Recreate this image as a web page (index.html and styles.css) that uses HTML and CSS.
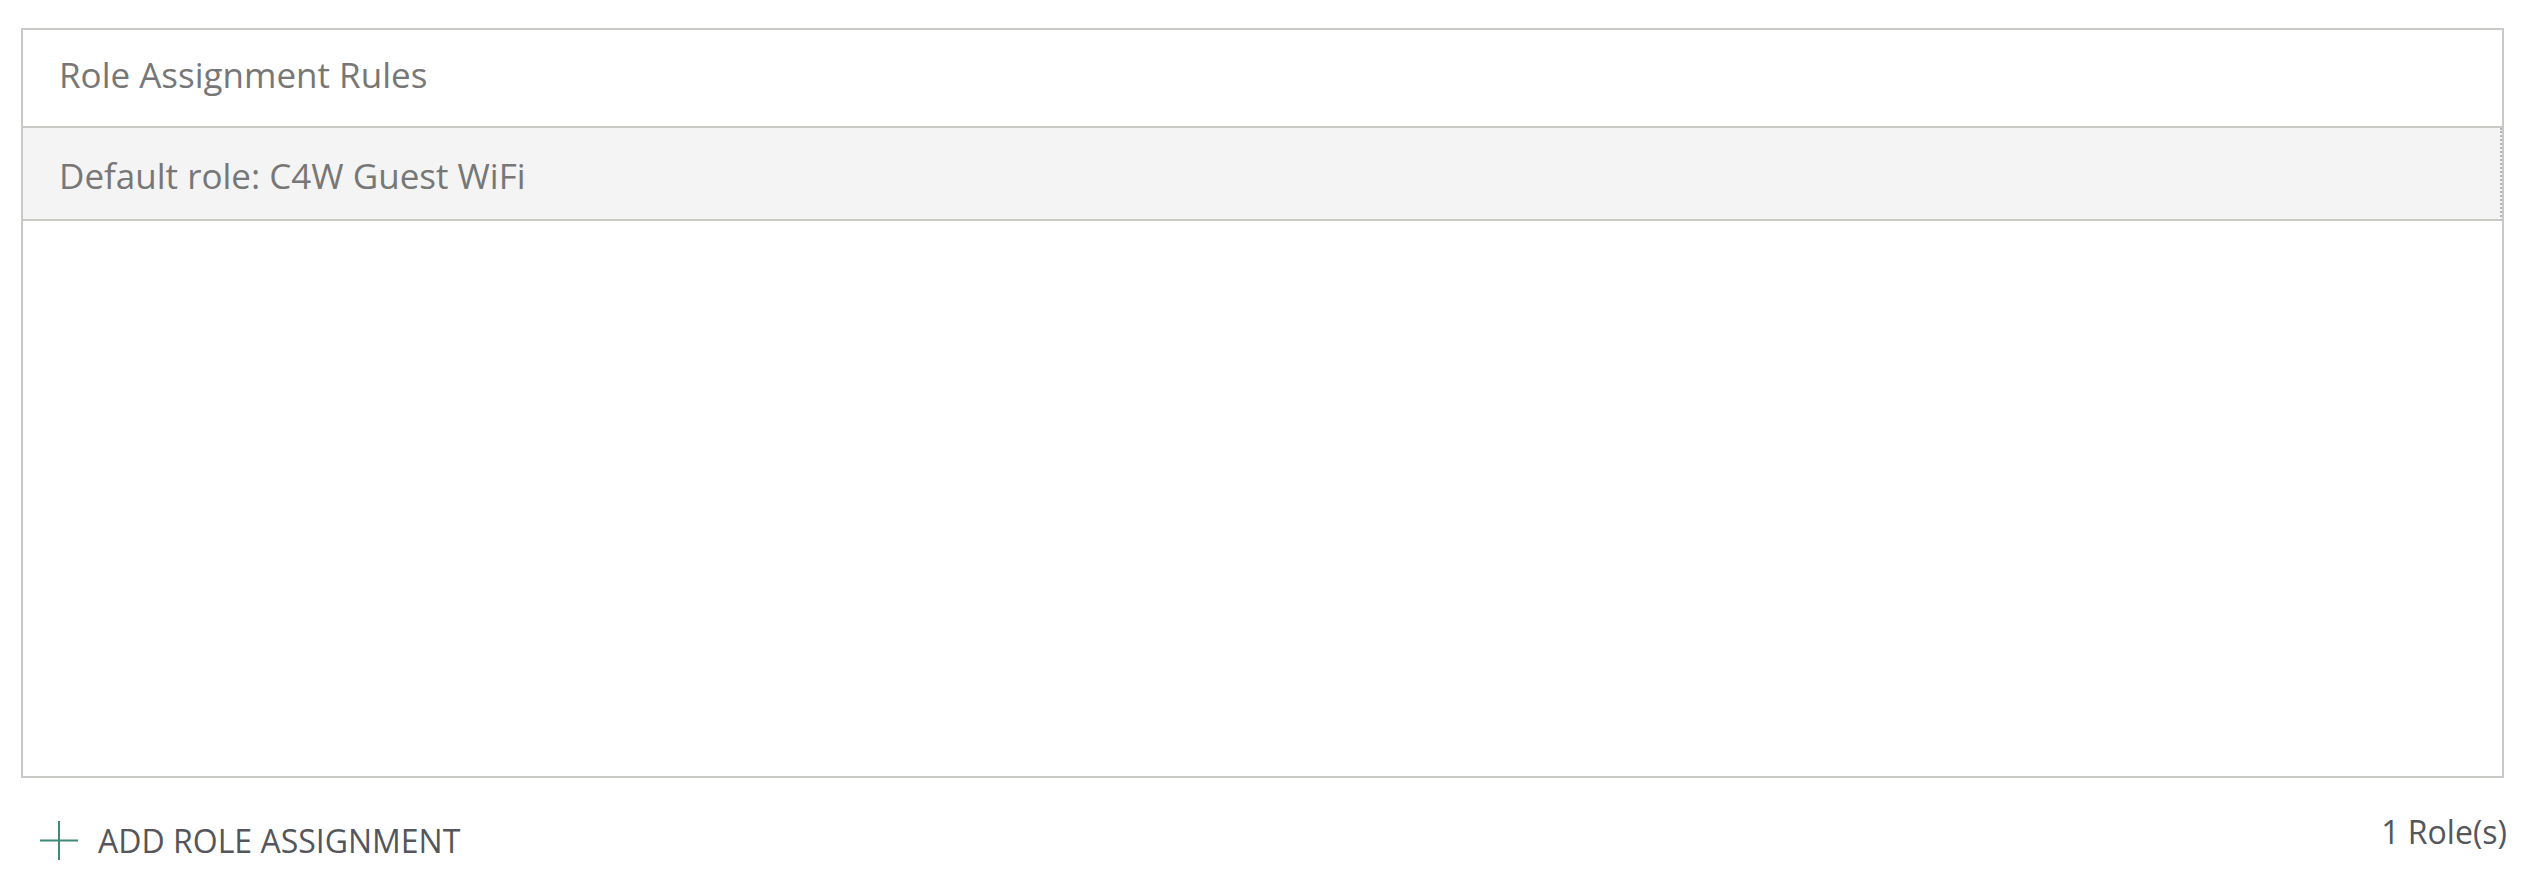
FILE: index.html
```html
<!DOCTYPE html>
<html lang="en">
<head>
    <meta charset="UTF-8">
    <title>Role Assignment Rules</title>
    <link rel="stylesheet" href="styles.css">
</head>
<body>
    <div class="rules-panel">
        <div class="rules-header">Role Assignment Rules</div>
        <div class="rules-list">
            <div class="rule-row">Default role: C4W Guest WiFi</div>
        </div>
    </div>

    <div class="rules-footer">
        <a href="#" class="add-button">
            <svg class="add-icon" width="38" height="39" viewBox="0 0 38 39">
                <path d="M19 0V39M0 19.5H38" stroke="#3d8a78" stroke-width="2" fill="none"/>
            </svg>
            <span>ADD ROLE ASSIGNMENT</span>
        </a>
        <div class="role-count">1 Role(s)</div>
    </div>
</body>
</html>
```

FILE: styles.css
```css
body {
    margin: 0;
    padding: 28px 28px 0 21px;
    font-family: "Open Sans", "Liberation Sans", sans-serif;
    background: #fff;
}
.rules-panel {
    height: 750px;
    box-sizing: border-box;
    border: 2px solid #c9c9c5;
    display: flex;
    flex-direction: column;
}
.rules-header {
    height: 98px;
    box-sizing: border-box;
    display: flex;
    align-items: center;
    padding: 0 0 7px 36px;
    font-size: 35px;
    color: #777;
    border-bottom: 2px solid #c9c9c5;
}
.rules-list {
    flex: 1;
}
.rule-row {
    height: 93px;
    box-sizing: border-box;
    display: flex;
    align-items: center;
    padding: 4px 0 0 36px;
    font-size: 35px;
    color: #777;
    background-color: #f4f4f4;
    border-bottom: 2px solid #c9c9c5;
    border-right: 2px dotted #b5b5b5;
}
.rules-footer {
    display: flex;
    justify-content: space-between;
    align-items: flex-start;
    margin-top: 32px;
    margin-right: -3px;
}
.add-button {
    display: flex;
    align-items: center;
    gap: 20px;
    margin-top: 9px;
    padding-left: 19px;
    color: #55565b;
    font-size: 32px;
    text-decoration: none;
}
.role-count {
    font-size: 32px;
    color: #55565b;
}
```
